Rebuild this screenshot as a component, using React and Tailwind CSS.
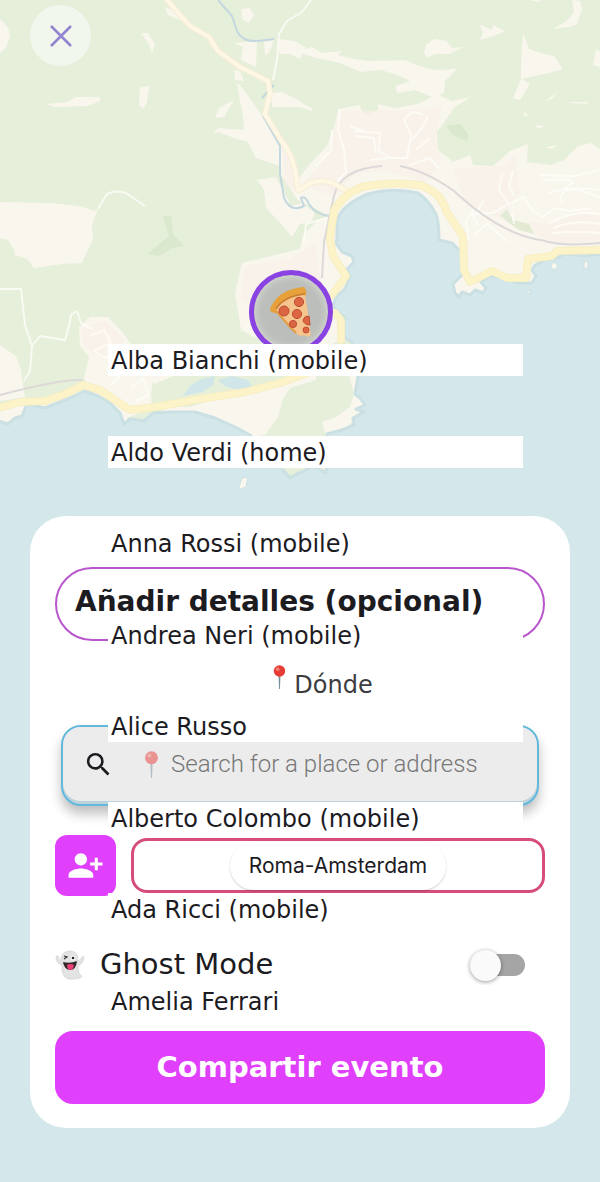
import { MdPersonAddAlt1, MdSearch } from "react-icons/md";

const contacts = [
  "Alba Bianchi (mobile)",
  "Aldo Verdi (home)",
  "Anna Rossi (mobile)",
  "Andrea Neri (mobile)",
  "Alice Russo",
  "Alberto Colombo (mobile)",
  "Ada Ricci (mobile)",
  "Amelia Ferrari",
];

const sea =
  "M-9 419L8 424L15 418L22 416L27 404L45 408L60 402L70 398L85 391L98 396L110 403L120 413L124 424L130 419L144 421L153 413L170 412L195 412L215 418L235 427L250 435L262 448L272 460L283 470L290 478L297 474L304 471L313 466L326 473L327 464L325 448L327 434L342 430L354 425L353 418L364 412L356 409L365 405L360 398L355 394L358 377L354 350L352 342L345 338L343 328L345 318L338 312L333 306L336 297L345 289L350 277L347 269L354 262L352 256L342 252L336 243L337 237L337 222Q339 213 346 207Q355 199 368 194Q392 187 418 193Q429 201 434 211Q439 216 439 240L452 243L461 252L463 274L453 284L455 293L459 297L462 292L470 295L475 290L483 293L486 288L481 282L490 276L508 279L517 283L532 283L536 276L532 270L535 265L545 260L556 258L565 254L585 256L609 253V1190H-9Z";

const secondaryRoads =
  "M167 0L180 15L190 26L209 37L218 51L240 67L268 81L270 93L265 114L281 140Q295 157 297 184L298 190M300 190Q316 176 335 184L350 193";

const coastRoad =
  "M-5 409L20 402L45 401L65 394L83 385L100 390L130 410L155 407L200 399L245 392L280 383L310 372M341 340V320L335 313M332 295L346 276L333 256L330 238L334 211Q343 194 362 187Q390 181 420 185Q442 193 446 211L463 236L464 270L470 282L480 277L492 271L507 278L526 278L528 259L552 256L557 251L605 250";

function MapBackground() {
  return (
    <svg
      className="absolute inset-0 h-full w-full"
      viewBox="0 0 600 1182"
      preserveAspectRatio="xMidYMin slice"
      aria-hidden="true"
    >
      <rect width="600" height="1182" fill="#e5efda" />
      <g fill="#f9f6ee">
        <path d="M0 202L50 203L80 206L94 211L98 209L92 225L93 240L88 250L82 263L62 264L34 268L27 259L15 255L14 250L8 240L0 238Z" />
        <path d="M0 19Q9 26 10 36Q7 49 0 53Z" />
        <path d="M47 104L67 102L76 97L100 97L100 101L88 106L55 107Z" />
        <path d="M140 87L149 86L147 102L144 108L139 106ZM141 33L148 33L155 45L152 53L148 43Z" />
        <path d="M165 8L176 10L190 25L180 20L168 15ZM241 9L250 8L254 15L249 23L242 19ZM234 43L257 41L256 67L241 60L243 47ZM264 42L274 40L269 53L265 55ZM279 39L294 41L305 47L300 59L290 54L279 54ZM234 70L240 71L244 81L235 80Z" />
        <path d="M237 82L244 90L262 115L282 148L279 166L256 158L248 142L237 139L218 132L213 135L218 128L244 130L243 116L239 97Z" />
        <path d="M271 93L282 92L296 99L304 104L313 109L311 111L300 107L272 107ZM215 118L219 108L234 100L224 117Z" />
        <path d="M257 180L276 177L283 190L291 206L302 203L315 213L311 222L300 224L292 237L281 224L266 208L264 190Z" />
        <path d="M281 145L290 155L298 180L308 166L327 146L335 124L338 109L359 105L365 115L378 110L378 104L395 108L418 104L431 97L440 96L452 101L471 97L455 107L437 132L438 150L453 162L470 155L473 165L493 166L510 151L528 144L527 162L551 165L564 160L578 146L591 143L600 149V258L460 310L440 260L340 340L300 360L241 330L235 293L242 263L300 249L303 235L318 220L330 216L298 200L281 175Z" />
        <path d="M300 50L312 47L322 53L342 51L338 55L354 59L370 61L405 60L419 66L435 70L457 69L445 81L444 93L435 98L415 90L397 93L396 86L410 81L395 74L380 70L361 72L340 63L316 58L300 53Z" />
        <path d="M426 45L434 39L446 41L452 48L463 47L449 54L435 54L427 58L424 53ZM479 24L492 30L493 25L505 31L491 37L480 40L483 32ZM523 33L529 49L544 54L554 56L563 69L549 73L535 76L522 79L530 84L520 100L513 98L521 79L521 60ZM572 0L580 1L582 9L577 24L569 27L553 29L568 20L574 12ZM596 49L600 52V67L593 65Z" />
        <path d="M546 100L558 92L552 99ZM523 111L528 115L525 117ZM534 125L544 126L539 129ZM545 147L559 145L551 149ZM568 102L589 102L586 104L571 103ZM530 0H542L537 2Z" />
        <path d="M0 345L16 356L21 370L23 386L25 397L0 401Z" />
        <path d="M79 327L90 317L108 317L124 334L130 343L140 351L154 376L151 394L152 408L127 418L105 402L91 391L84 378L89 357L80 346Z" />
        <path d="M148 375L175 370L173 376L155 384Z" />
        <path d="M190 407L240 390L280 380L295 373L318 367L316 380L290 388L283 399L278 417L266 434L252 438L235 430L215 420L195 414L160 414L166 406Z" />
        <path d="M342 350L356 350L359 398L366 407L354 417L347 430L325 434L322 422L336 417L350 407L354 394Z" />
        <path d="M0 405L26 401L60 398L90 388L122 410L128 420L122 426L108 408L86 393L68 402L45 411L27 407L22 420L8 427L0 420Z" />
      </g>
      <g fill="#f8f0e8" opacity="0.6">
        <path d="M340 111L400 110L442 107L435 137L442 161L426 182L390 172L356 172L334 197L302 184L325 160Z" />
        <path d="M453 169L506 166L515 155L520 193L499 219L550 225L574 213L600 216V245L560 245L520 228L465 202Z" />
        <path d="M245 266L291 258L315 244L321 280L330 301L326 330L240 300ZM282 147L292 155L297 190L285 185ZM81 329L105 320L125 340L102 359L84 346Z" />
      </g>
      <g fill="#d2e5c5" opacity="0.6">
        <path d="M163 216L171 216L173 234L184 246L172 248L160 256L147 254L157 246L169 236Z" />
        <path d="M446 126L460 124L468 134L467 141L453 135ZM500 216L507 209L513 220L529 224L534 234L519 230Z" />
      </g>
      <g fill="none" stroke="#fffefa" strokeWidth="2" strokeLinejoin="round" opacity="0.8">
        <path d="M98 209L107 194Q121 188 132 197L145 206M0 289H21L25 325L32 346L40 336L65 340L70 322L71 315L77 311L81 323L92 329M32 346L30 371L24 381" />
        <path d="M311 0L302 12L287 21L279 34L277 60L273 80M340 110L338 130L344 150L346 172L334 185M332 130L331 150L316 166M354 131L380 133L379 151L391 158L407 158L411 134L404 120L412 112L423 114M355 136L374 138L376 153M350 126L366 132M370 160L390 158M410 165L430 158L439 168M410 142L422 128L428 116M416 150L430 138" />
        <path d="M502 174L499 190L509 204L524 197L532 210L542 217L555 208L570 211L591 208M509 204L493 213L472 214L478 225M513 171L509 185L514 196M540 175L574 176L600 170M542 181Q565 177 573 182L563 190M548 193Q573 186 600 190M562 202Q557 190 576 189L600 197M550 223Q575 209 600 214M553 228Q576 219 600 224M552 233Q575 231 600 233" />
        <path d="M474 209L466 221L468 240M484 200L475 216M512 213L514 224M474 235L487 224L508 242" />
        <path d="M90 336L104 330L111 343L94 351L105 358L119 347L130 354L125 371L110 385M131 387L143 379L149 395L136 401M304 241L306 224L327 218" />
      </g>
      <path
        d="M218 0L232 16L237 31Q242 42 258 41L274 39M274 85L262 98M263 116L280 146L280 174L284 198Q291 213 304 206L301 198Q305 195 309 204Q316 215 330 216"
        fill="none"
        stroke="#c3d8df"
        strokeWidth="2"
      />
      <path
        d="M382 166Q340 169 334 196L324 242L322 278M400 166Q426 171 454 191Q500 234 541 240Q563 247 600 243M0 395Q60 379 82 380"
        fill="none"
        stroke="#dcd9d8"
        strokeWidth="2"
      />
      <path d={sea} fill="#d4e8eb" stroke="#cbe0e3" strokeWidth="3" strokeLinejoin="round" />
      <path d="M183 396L191 385L202 379L215 376L213 385L202 392ZM218 380L232 376L248 380L253 388L238 390L225 386Z" fill="#d1e6e9" />
      <path d="M238 490L242 478L248 477L246 487Z" fill="#f9f6ee" stroke="#cbe0e3" />
      <g fill="#f9f6ee" stroke="#cbe0e3">
        <path d="M551 264L554 262L558 266L555 270L551 268ZM584 262L588 261L588 268L584 269Z" />
        <path d="M527 291L530 290L531 293H528Z" />
      </g>
      <g fill="none" strokeLinecap="round" strokeLinejoin="round">
        <path d={secondaryRoads} stroke="#f7ecd8" strokeWidth="6" />
        <path d={secondaryRoads} stroke="#fdf7e3" strokeWidth="4" />
        <path d={coastRoad} stroke="#f7eec3" strokeWidth="8" />
        <path d={coastRoad} stroke="#fcf4c8" strokeWidth="6" />
      </g>
    </svg>
  );
}

function Pizza() {
  return (
    <svg viewBox="0 0 48 54" className="h-[54px] w-12" aria-hidden="true">
      <path d="M3 24Q11 4 37 2Q40 5 39 11Q18 13 9 28Q3 28 3 24Z" fill="#e7a13a" />
      <path d="M9 25Q18 11 38 9L44 50Q41 53 37 50Q33 53 29 48Q26 45 24 43Z" fill="#f6c58d" />
      <path d="M9 24Q17 11 38 9" fill="none" stroke="#c67c30" strokeWidth="1.5" />
      <path d="M9 26L24 43L29 48" fill="none" stroke="#e49b42" strokeWidth="2" />
      <g fill="#dc6542" stroke="#bd4d35" strokeWidth="1">
        <circle cx="17" cy="26" r="5" />
        <circle cx="32" cy="17" r="4.6" />
        <circle cx="30" cy="29" r="4.6" />
        <circle cx="26" cy="39" r="3.6" />
        <path d="M42 31Q37 31 36 35Q37 40 43 40Z" />
        <circle cx="39" cy="45" r="3" />
      </g>
    </svg>
  );
}

function Pushpin({ className }) {
  return (
    <svg viewBox="0 0 14 26" className={className} aria-hidden="true">
      <path d="M6 12H8L7.5 26H6.5Z" fill="#77929c" />
      <circle cx="7" cy="6.5" r="6.2" fill="#e73b35" />
      <circle cx="5" cy="4.5" r="2" fill="#f47e72" />
    </svg>
  );
}

function Ghost() {
  return (
    <svg viewBox="0 0 30 30" className="size-[30px]" aria-hidden="true">
      <path
        d="M15 1C8 1 6 6 6 11Q4 9 3 6Q1 5 1 8Q2 14 7 15Q6 21 9 26Q12 30 19 29Q26 29 27 26Q23 25 23 16Q28 14 29 8Q29 5 27 7Q26 10 23 11C23 5 21 1 15 1Z"
        fill="#e3e3e3"
        stroke="#cecece"
        strokeWidth="0.6"
      />
      <path d="M9 6L12 7L9 9" fill="none" stroke="#333" strokeWidth="1.2" />
      <circle cx="18" cy="8" r="2.3" fill="#fff" />
      <circle cx="18" cy="8" r="1.3" fill="#222" />
      <path d="M8 12Q15 14 22 11Q21 20 15 20Q9 19 8 12Z" fill="#31282a" />
      <path d="M12 15Q15 13 19 15Q18 20 16 20Q12 20 12 15Z" fill="#ee3e73" />
    </svg>
  );
}

export default function App() {
  return (
    <main className="relative flex min-h-screen flex-col justify-between overflow-hidden bg-[#d4e8eb] px-[30px] pt-[5px] pb-[54px] font-['DejaVu_Sans',sans-serif] text-[#1c1b1f]">
      <MapBackground />

      <button
        type="button"
        aria-label="Cerrar"
        className="relative flex size-[61px] items-center justify-center rounded-full bg-[#f1f7ed]"
      >
        <svg viewBox="0 0 24 24" className="size-6" aria-hidden="true">
          <path d="M2 2L22 22M22 2L2 22" stroke="#9384cf" strokeWidth="2.6" />
        </svg>
      </button>

      <div className="absolute top-[270px] left-[249px] flex size-[84px] items-center justify-center rounded-full border-[5px] border-[#8b42e3] bg-[#bbbeba] shadow-[inset_0_0_8px_#dfe5da]">
        <Pizza />
      </div>

      <section className="relative flex flex-col rounded-[36px] bg-white px-[25px] pt-[51px] pb-6">
        <button
          type="button"
          className="h-[74px] rounded-full border-2 border-[#b857cb] px-[18px] pb-1 text-left text-[28px] font-bold whitespace-nowrap"
        >
          Añadir detalles (opcional)
        </button>

        <div className="mt-6 flex h-10 items-center justify-center gap-2 pl-[46px] text-2xl text-[#3c3c40]">
          <Pushpin className="mb-4 h-6 w-[13px]" />
          <label htmlFor="place">Dónde</label>
        </div>

        <div className="mx-[6px] mt-5 rounded-[20px] border-2 border-[#62b9dc] bg-[#bcd3dc] pb-[3px] shadow-[0_8px_12px_#00000040]">
          <div className="flex h-[74px] items-center rounded-[18px] bg-[#ececec] pl-5">
            <MdSearch className="size-[31px]" aria-hidden="true" />
            <Pushpin className="ml-[30px] h-[27px] w-[15px] opacity-50" />
            <input
              id="place"
              type="text"
              placeholder="Search for a place or address"
              className="ml-3 h-10 min-w-0 flex-1 bg-transparent font-[Roboto,sans-serif] text-2xl font-light outline-none placeholder:text-[#777777]"
            />
          </div>
        </div>

        <div className="mt-[29px] flex items-center gap-[15px]">
          <button
            type="button"
            aria-label="Añadir contacto"
            className="flex size-[61px] shrink-0 items-center justify-center rounded-xl bg-[#e040fb] text-white"
          >
            <MdPersonAddAlt1 className="size-[37px]" aria-hidden="true" />
          </button>
          <div className="flex h-[55px] flex-1 items-center justify-center rounded-2xl border-[3px] border-[#d64d7b]">
            <button
              type="button"
              className="h-12 rounded-full bg-white px-[19px] font-['Inter',sans-serif] text-[21px] shadow-[0_1px_2px_#00000033]"
            >
              Roma-Amsterdam
            </button>
          </div>
        </div>

        <div className="mt-12 flex h-[42px] items-center">
          <Ghost />
          <label htmlFor="ghost" className="ml-[15px] flex-1 text-[29px]">
            Ghost Mode
          </label>
          <input
            id="ghost"
            type="checkbox"
            role="switch"
            className="mr-5 flex h-[22px] w-[55px] appearance-none items-center rounded-full bg-[linear-gradient(90deg,transparent_15px,#a5a5a5_15px)] before:block before:size-[31px] before:shrink-0 before:rounded-full before:bg-[#fafafa] before:shadow-[0_1px_4px_#00000066] checked:justify-end"
          />
        </div>

        <button
          type="button"
          className="mt-[45px] h-[73px] rounded-[18px] bg-[#e040fb] text-[29px] font-bold text-white"
        >
          Compartir evento
        </button>
      </section>

      <ul className="pointer-events-none absolute right-[77px] bottom-[165px] left-[108px] flex h-[673px] flex-col justify-between text-2xl/[34px]">
        {contacts.map((name) => (
          <li key={name} className="h-8 bg-white pl-[3px] whitespace-nowrap">
            {name}
          </li>
        ))}
      </ul>
    </main>
  );
}
